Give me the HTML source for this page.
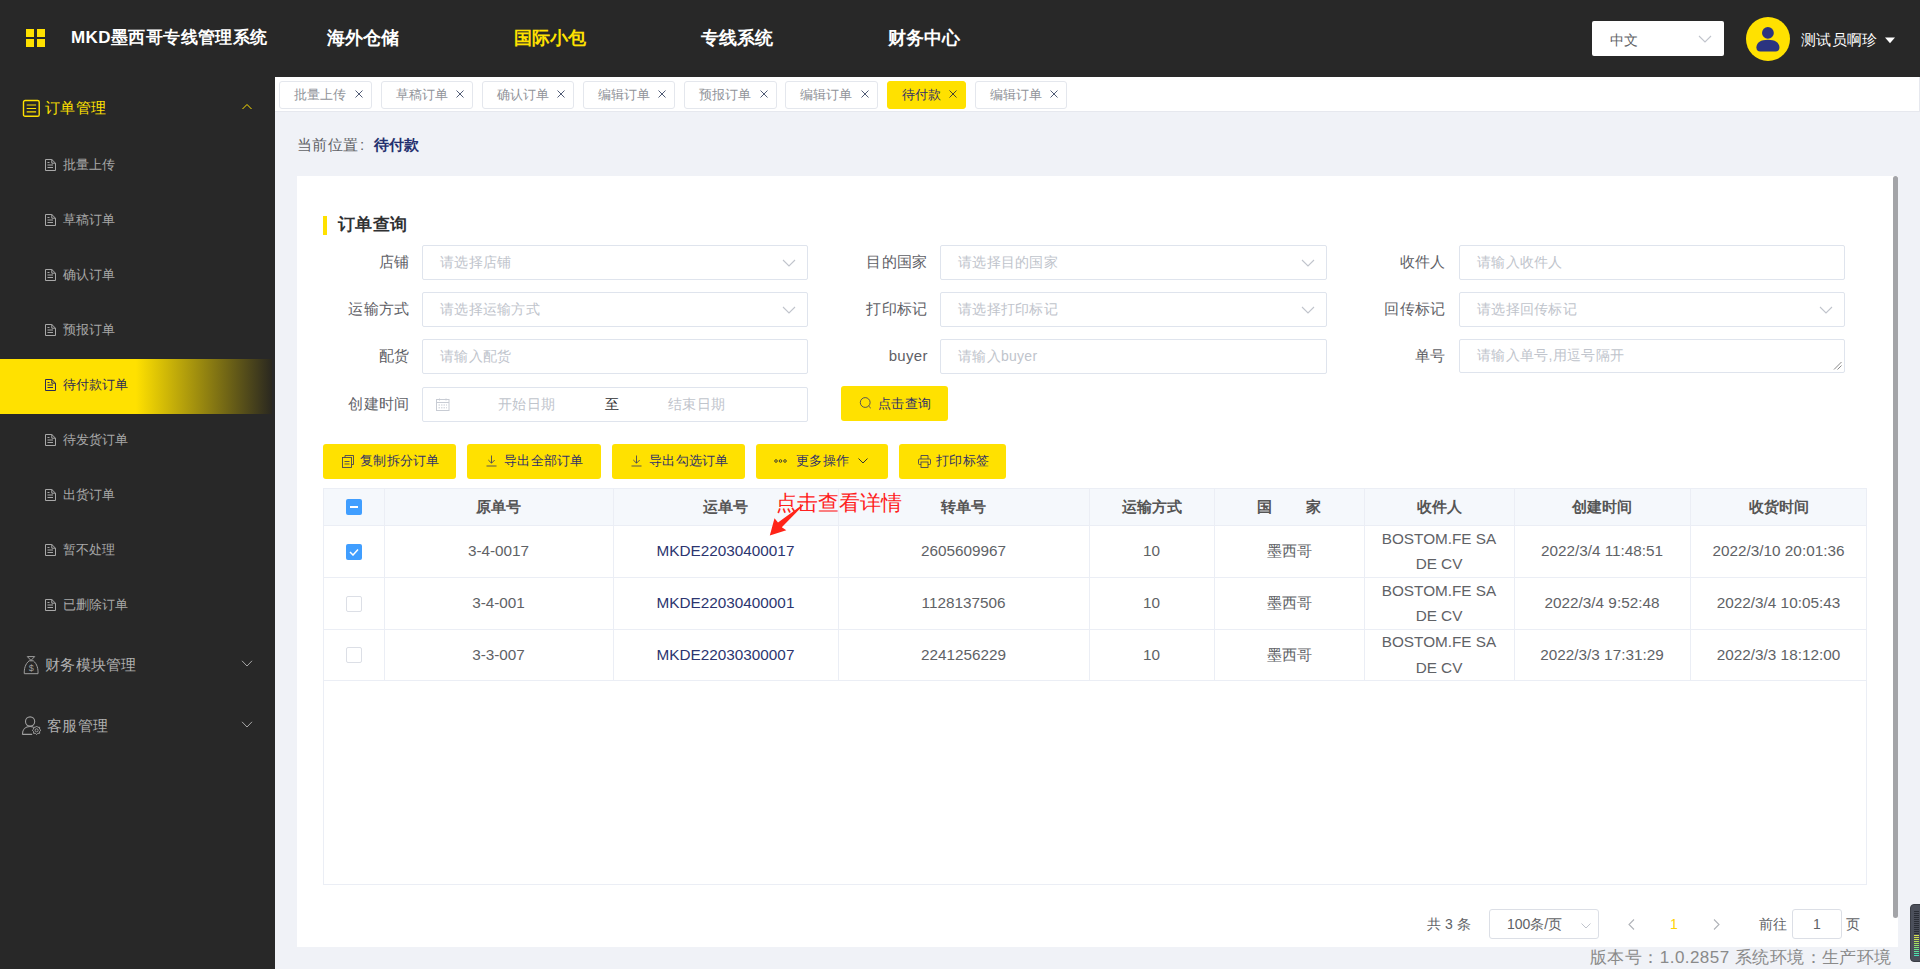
<!DOCTYPE html>
<html><head><meta charset="utf-8"><title>MKD</title>
<style>
*{box-sizing:border-box;margin:0;padding:0}
html,body{width:1920px;height:969px;overflow:hidden}
body{position:relative;background:#f0f2f7;font-family:"Liberation Sans",sans-serif;color:#606266}
svg{display:block}
.abs{position:absolute}
#hdr{position:absolute;left:0;top:0;width:1920px;height:77px;background:#282828}
#side{position:absolute;left:0;top:77px;width:275px;height:892px;background:#282828}
.nav{position:absolute;top:26px;font-size:18px;font-weight:bold;color:#fff;line-height:24px;white-space:nowrap}
.sq{position:absolute;width:8px;height:8px;background:#ffe100}
#tabs{position:absolute;left:275px;top:77px;width:1645px;height:35px;background:#fff;border-bottom:1px solid #e6e8ee;border-right:1px solid #e6e8ee}
.tab{position:absolute;top:4px;height:28px;border:1px solid #e4e7ed;border-radius:3px;background:#fff;font-size:13px;color:#909399;line-height:26px;padding-left:13.5px;white-space:nowrap}
.tab i{position:absolute;right:8px;top:8px;width:8px;height:8px;display:block}
.tab.on{background:#ffe100;border-color:#ffe100;color:#30306a}
.mi{position:absolute;left:45px;font-size:13px;color:#a8a8a8;line-height:20px;white-space:nowrap}
.mi svg{position:absolute;left:0;top:4px}
.mi span{position:absolute;left:18px;top:0}
#card{position:absolute;left:297px;top:176px;width:1601px;height:771px;background:#fff}
.lbl{position:absolute;font-size:15px;letter-spacing:0.3px;color:#5e6066;line-height:20px;text-align:right;white-space:nowrap}
.inp{position:absolute;height:35px;border:1px solid #dfe4ed;border-radius:2px;background:#fff;font-size:14px;letter-spacing:0.3px;color:#c0c4cc;line-height:33px;padding-left:17px;white-space:nowrap}
.inp svg.dd{position:absolute;right:11px;top:13px}
.btn{position:absolute;height:35px;background:#ffe100;border-radius:3px;font-size:13px;letter-spacing:0.3px;color:#30306a;line-height:33px;white-space:nowrap}
.btn span{position:absolute;top:0}
.th{position:absolute;text-align:center;font-size:15px;font-weight:bold;color:#555;line-height:20px;white-space:nowrap}
.td{position:absolute;text-align:center;font-size:15.3px;color:#606266;line-height:20px;white-space:nowrap}
.hl{position:absolute;height:1px;background:#ebeef5}
.vl{position:absolute;width:1px;background:#ebeef5}
</style></head><body>
<div id="hdr">
<div class="sq" style="left:26px;top:29px"></div><div class="sq" style="left:37px;top:29px"></div>
<div class="sq" style="left:26px;top:39px"></div><div class="sq" style="left:37px;top:39px"></div>
<div class="nav" style="left:71px;font-size:17px;letter-spacing:0.4px">MKD墨西哥专线管理系统</div>
<div class="nav" style="left:327px;color:#fff">海外仓储</div>
<div class="nav" style="left:514px;color:#ffe100">国际小包</div>
<div class="nav" style="left:701px;color:#fff">专线系统</div>
<div class="nav" style="left:888px;color:#fff">财务中心</div>
<div class="abs" style="left:1592px;top:21px;width:132px;height:35px;background:#fff;border-radius:2px">
<div class="abs" style="left:18px;top:8.5px;font-size:14px;color:#606266;line-height:20px">中文</div>
<svg class="abs" style="left:106px;top:14px" width="14" height="8" viewBox="0 0 14 8"><path d="M1 1 L7 7 L13 1" fill="none" stroke="#c0c4cc" stroke-width="1.1"/></svg>
</div>
<div class="abs" style="left:1746px;top:17px;width:44px;height:44px;border-radius:50%;background:#ffe100;overflow:hidden">
<svg class="abs" style="left:0;top:0" width="44" height="44" viewBox="0 0 44 44"><circle cx="21.9" cy="15.9" r="5.9" fill="#2b3480"/><path d="M10.4 30.5 C10.4 25.5 15 22.8 21.9 22.8 C28.8 22.8 33.4 25.5 33.4 30.5 C33.4 33 32 34.4 29.5 34.4 H14.3 C11.8 34.4 10.4 33 10.4 30.5 Z" fill="#2b3480"/></svg>
</div>
<div class="abs" style="left:1801px;top:30px;font-size:15px;letter-spacing:0.3px;color:#fff;line-height:20px;white-space:nowrap">测试员啊珍</div>
<svg class="abs" style="left:1885px;top:37px" width="10" height="7" viewBox="0 0 10 7"><path d="M0 0.5 L10 0.5 L5 6.3 Z" fill="#fff"/></svg>
</div>
<div id="side">
<svg class="abs" style="left:22px;top:22px" width="19" height="19" viewBox="0 0 19 19"><rect x="1.5" y="1.45" width="15.7" height="15.8" rx="1.6" fill="none" stroke="#ffe100" stroke-width="1.4"/><path d="M4.7 6 H14.1 M4.7 9.5 H14.1 M4.7 12.8 H14.1" stroke="#ffe100" stroke-width="1.2"/></svg>
<div class="abs" style="left:45px;top:21px;font-size:15px;letter-spacing:0.3px;color:#ffe100;line-height:20px">订单管理</div>
<svg class="abs" style="left:241px;top:26px" width="12" height="7" viewBox="0 0 12 7"><path d="M1.5 6 L6 1.5 L10.5 6" fill="none" stroke="#ffe100" stroke-width="1"/></svg>
<div class="mi" style="top:78px;color:#a8a8a8"><svg width="11" height="12" viewBox="0 0 11 12"><path d="M0.5 0.5 H6.8 L10.5 4.2 V11.5 H0.5 Z M6.8 0.5 V4.2 H10.5" fill="none" stroke="#a8a8a8" stroke-width="1"/><path d="M2.5 3.5 H4.5 M2.5 6 H8 M2.5 8.5 H8" stroke="#a8a8a8" stroke-width="1"/></svg><span>批量上传</span></div>
<div class="mi" style="top:133px;color:#a8a8a8"><svg width="11" height="12" viewBox="0 0 11 12"><path d="M0.5 0.5 H6.8 L10.5 4.2 V11.5 H0.5 Z M6.8 0.5 V4.2 H10.5" fill="none" stroke="#a8a8a8" stroke-width="1"/><path d="M2.5 3.5 H4.5 M2.5 6 H8 M2.5 8.5 H8" stroke="#a8a8a8" stroke-width="1"/></svg><span>草稿订单</span></div>
<div class="mi" style="top:188px;color:#a8a8a8"><svg width="11" height="12" viewBox="0 0 11 12"><path d="M0.5 0.5 H6.8 L10.5 4.2 V11.5 H0.5 Z M6.8 0.5 V4.2 H10.5" fill="none" stroke="#a8a8a8" stroke-width="1"/><path d="M2.5 3.5 H4.5 M2.5 6 H8 M2.5 8.5 H8" stroke="#a8a8a8" stroke-width="1"/></svg><span>确认订单</span></div>
<div class="mi" style="top:243px;color:#a8a8a8"><svg width="11" height="12" viewBox="0 0 11 12"><path d="M0.5 0.5 H6.8 L10.5 4.2 V11.5 H0.5 Z M6.8 0.5 V4.2 H10.5" fill="none" stroke="#a8a8a8" stroke-width="1"/><path d="M2.5 3.5 H4.5 M2.5 6 H8 M2.5 8.5 H8" stroke="#a8a8a8" stroke-width="1"/></svg><span>预报订单</span></div>
<div class="abs" style="left:0;top:282px;width:272px;height:55px;background:linear-gradient(90deg,#ffe100 0%,#ffe100 50%,#2a2820 100%)"></div>
<div class="mi" style="top:298px;color:#2b2b55"><svg width="11" height="12" viewBox="0 0 11 12"><path d="M0.5 0.5 H6.8 L10.5 4.2 V11.5 H0.5 Z M6.8 0.5 V4.2 H10.5" fill="none" stroke="#2b2b55" stroke-width="1"/><path d="M2.5 3.5 H4.5 M2.5 6 H8 M2.5 8.5 H8" stroke="#2b2b55" stroke-width="1"/></svg><span>待付款订单</span></div>
<div class="mi" style="top:353px;color:#a8a8a8"><svg width="11" height="12" viewBox="0 0 11 12"><path d="M0.5 0.5 H6.8 L10.5 4.2 V11.5 H0.5 Z M6.8 0.5 V4.2 H10.5" fill="none" stroke="#a8a8a8" stroke-width="1"/><path d="M2.5 3.5 H4.5 M2.5 6 H8 M2.5 8.5 H8" stroke="#a8a8a8" stroke-width="1"/></svg><span>待发货订单</span></div>
<div class="mi" style="top:408px;color:#a8a8a8"><svg width="11" height="12" viewBox="0 0 11 12"><path d="M0.5 0.5 H6.8 L10.5 4.2 V11.5 H0.5 Z M6.8 0.5 V4.2 H10.5" fill="none" stroke="#a8a8a8" stroke-width="1"/><path d="M2.5 3.5 H4.5 M2.5 6 H8 M2.5 8.5 H8" stroke="#a8a8a8" stroke-width="1"/></svg><span>出货订单</span></div>
<div class="mi" style="top:463px;color:#a8a8a8"><svg width="11" height="12" viewBox="0 0 11 12"><path d="M0.5 0.5 H6.8 L10.5 4.2 V11.5 H0.5 Z M6.8 0.5 V4.2 H10.5" fill="none" stroke="#a8a8a8" stroke-width="1"/><path d="M2.5 3.5 H4.5 M2.5 6 H8 M2.5 8.5 H8" stroke="#a8a8a8" stroke-width="1"/></svg><span>暂不处理</span></div>
<div class="mi" style="top:518px;color:#a8a8a8"><svg width="11" height="12" viewBox="0 0 11 12"><path d="M0.5 0.5 H6.8 L10.5 4.2 V11.5 H0.5 Z M6.8 0.5 V4.2 H10.5" fill="none" stroke="#a8a8a8" stroke-width="1"/><path d="M2.5 3.5 H4.5 M2.5 6 H8 M2.5 8.5 H8" stroke="#a8a8a8" stroke-width="1"/></svg><span>已删除订单</span></div>
<svg class="abs" style="left:18px;top:573px" width="26" height="26" viewBox="0 0 26 26"><path d="M9.3 6.6 H16.7 L13 10.4 Z" fill="none" stroke="#a0a0a0" stroke-width="1"/><path d="M11.1 10.8 C7.2 14 6 19 6.3 23.7 H20 C20.3 19 19.2 14 15.3 10.8 Z" fill="none" stroke="#a0a0a0" stroke-width="1"/><text x="13.3" y="20.8" font-size="9" text-anchor="middle" fill="#a0a0a0" font-family="Liberation Sans">$</text></svg>
<div class="abs" style="left:45px;top:578px;font-size:15px;letter-spacing:0.3px;color:#b0b0b0;line-height:20px">财务模块管理</div>
<svg class="abs" style="left:241px;top:583px" width="12" height="7" viewBox="0 0 12 7"><path d="M1 0.8 L6 6 L11 0.8" fill="none" stroke="#a8a8a8" stroke-width="1"/></svg>
<svg class="abs" style="left:18px;top:633px" width="26" height="26" viewBox="0 0 26 26"><circle cx="12.1" cy="11.5" r="4.6" fill="none" stroke="#a0a0a0" stroke-width="1.1"/><path d="M4.4 24.4 C4.4 19.5 7.5 16.5 12.1 16.5 C13.2 16.5 14.2 16.7 15 17 M4.4 24.4 H14.2" fill="none" stroke="#a0a0a0" stroke-width="1.1"/><path d="M22.90 20.30 L21.56 21.52 L21.64 23.34 L19.82 23.26 L18.60 24.60 L17.38 23.26 L15.56 23.34 L15.64 21.52 L14.30 20.30 L15.64 19.08 L15.56 17.26 L17.38 17.34 L18.60 16.00 L19.82 17.34 L21.64 17.26 L21.56 19.08 Z" fill="none" stroke="#a0a0a0" stroke-width="1"/><circle cx="18.6" cy="20.3" r="1.5" fill="none" stroke="#a0a0a0" stroke-width="0.9"/></svg>
<div class="abs" style="left:47px;top:639px;font-size:15px;letter-spacing:0.3px;color:#b0b0b0;line-height:20px">客服管理</div>
<svg class="abs" style="left:241px;top:644px" width="12" height="7" viewBox="0 0 12 7"><path d="M1 0.8 L6 6 L11 0.8" fill="none" stroke="#a8a8a8" stroke-width="1"/></svg>
</div>
<div id="tabs">
<div class="tab" style="left:4.0px;width:93px">批量上传<i><svg width="8" height="8" viewBox="0 0 8 8"><path d="M0.5 0.5 L7.5 7.5 M7.5 0.5 L0.5 7.5" stroke="#3d4a66" stroke-width="0.9"/></svg></i></div>
<div class="tab" style="left:106.0px;width:92px">草稿订单<i><svg width="8" height="8" viewBox="0 0 8 8"><path d="M0.5 0.5 L7.5 7.5 M7.5 0.5 L0.5 7.5" stroke="#3d4a66" stroke-width="0.9"/></svg></i></div>
<div class="tab" style="left:207.0px;width:92px">确认订单<i><svg width="8" height="8" viewBox="0 0 8 8"><path d="M0.5 0.5 L7.5 7.5 M7.5 0.5 L0.5 7.5" stroke="#3d4a66" stroke-width="0.9"/></svg></i></div>
<div class="tab" style="left:308.0px;width:92px">编辑订单<i><svg width="8" height="8" viewBox="0 0 8 8"><path d="M0.5 0.5 L7.5 7.5 M7.5 0.5 L0.5 7.5" stroke="#3d4a66" stroke-width="0.9"/></svg></i></div>
<div class="tab" style="left:409.0px;width:93px">预报订单<i><svg width="8" height="8" viewBox="0 0 8 8"><path d="M0.5 0.5 L7.5 7.5 M7.5 0.5 L0.5 7.5" stroke="#3d4a66" stroke-width="0.9"/></svg></i></div>
<div class="tab" style="left:510.0px;width:93px">编辑订单<i><svg width="8" height="8" viewBox="0 0 8 8"><path d="M0.5 0.5 L7.5 7.5 M7.5 0.5 L0.5 7.5" stroke="#3d4a66" stroke-width="0.9"/></svg></i></div>
<div class="tab on" style="left:612.0px;width:79px">待付款<i><svg width="8" height="8" viewBox="0 0 8 8"><path d="M0.5 0.5 L7.5 7.5 M7.5 0.5 L0.5 7.5" stroke="#333" stroke-width="0.9"/></svg></i></div>
<div class="tab" style="left:700.0px;width:92px">编辑订单<i><svg width="8" height="8" viewBox="0 0 8 8"><path d="M0.5 0.5 L7.5 7.5 M7.5 0.5 L0.5 7.5" stroke="#3d4a66" stroke-width="0.9"/></svg></i></div>
</div>
<div class="abs" style="left:297px;top:135px;font-size:15px;letter-spacing:0.4px;line-height:20px;color:#606266;white-space:nowrap">当前位置</div>
<div class="abs" style="left:360px;top:135px;font-size:15px;line-height:20px;color:#606266;white-space:nowrap">:</div>
<div class="abs" style="left:374px;top:135px;font-size:15px;font-weight:bold;line-height:20px;color:#24306e;white-space:nowrap">待付款</div>
<div id="card">
<div class="abs" style="left:26px;top:40px;width:4px;height:19px;background:#ffe100"></div>
<div class="abs" style="left:41px;top:37px;font-size:17px;letter-spacing:0.4px;font-weight:bold;color:#303133;line-height:24px">订单查询</div>
<div class="lbl" style="left:12.6px;top:75.5px;width:100px">店铺</div>
<div class="inp" style="left:125.0px;top:69.0px;width:386px">请选择店铺<svg class="dd" width="14" height="8" viewBox="0 0 14 8"><path d="M1 1 L7 7 L13 1" fill="none" stroke="#c0c4cc" stroke-width="1.1"/></svg></div>
<div class="lbl" style="left:530.7px;top:75.5px;width:100px">目的国家</div>
<div class="inp" style="left:643.0px;top:69.0px;width:387px">请选择目的国家<svg class="dd" width="14" height="8" viewBox="0 0 14 8"><path d="M1 1 L7 7 L13 1" fill="none" stroke="#c0c4cc" stroke-width="1.1"/></svg></div>
<div class="lbl" style="left:1048.6px;top:75.5px;width:100px">收件人</div>
<div class="inp" style="left:1162.0px;top:69.0px;width:386px">请输入收件人</div>
<div class="lbl" style="left:12.6px;top:122.5px;width:100px">运输方式</div>
<div class="inp" style="left:125.0px;top:116.0px;width:386px">请选择运输方式<svg class="dd" width="14" height="8" viewBox="0 0 14 8"><path d="M1 1 L7 7 L13 1" fill="none" stroke="#c0c4cc" stroke-width="1.1"/></svg></div>
<div class="lbl" style="left:530.7px;top:122.5px;width:100px">打印标记</div>
<div class="inp" style="left:643.0px;top:116.0px;width:387px">请选择打印标记<svg class="dd" width="14" height="8" viewBox="0 0 14 8"><path d="M1 1 L7 7 L13 1" fill="none" stroke="#c0c4cc" stroke-width="1.1"/></svg></div>
<div class="lbl" style="left:1048.6px;top:122.5px;width:100px">回传标记</div>
<div class="inp" style="left:1162.0px;top:116.0px;width:386px">请选择回传标记<svg class="dd" width="14" height="8" viewBox="0 0 14 8"><path d="M1 1 L7 7 L13 1" fill="none" stroke="#c0c4cc" stroke-width="1.1"/></svg></div>
<div class="lbl" style="left:12.6px;top:169.5px;width:100px">配货</div>
<div class="inp" style="left:125.0px;top:163.0px;width:386px">请输入配货</div>
<div class="lbl" style="left:530.7px;top:169.5px;width:100px">buyer</div>
<div class="inp" style="left:643.0px;top:163.0px;width:387px">请输入buyer</div>
<div class="lbl" style="left:1048.6px;top:169.5px;width:100px">单号</div>
<div class="inp" style="left:1162.0px;top:163.0px;width:386px;height:34px;line-height:30px">请输入单号,用逗号隔开<svg class="abs" style="right:2px;bottom:2px" width="9" height="9" viewBox="0 0 9 9"><path d="M1 8.5 L8.5 1 M4.5 8.5 L8.5 4.5" stroke="#888" stroke-width="1"/></svg></div>
<div class="lbl" style="left:12.6px;top:217.5px;width:100px">创建时间</div>
<div class="inp" style="left:125.0px;top:211.0px;width:386px">
<svg class="abs" style="left:13px;top:10px" width="14" height="14" viewBox="0 0 14 14"><rect x="0.5" y="1.5" width="12.5" height="11" fill="none" stroke="#c8ccd4" stroke-width="1"/><path d="M0.5 4.5 H13" stroke="#c8ccd4" stroke-width="1"/><path d="M3.5 0.5 V2.5 M10 0.5 V2.5" stroke="#c8ccd4" stroke-width="1"/><path d="M2.5 7 H11 M2.5 9.8 H11" stroke="#c8ccd4" stroke-width="1" stroke-dasharray="1.5 1"/></svg>
<span class="abs" style="left:75px;top:0">开始日期</span>
<span class="abs" style="left:182px;top:0;color:#303133">至</span>
<span class="abs" style="left:245px;top:0">结束日期</span>
</div>
<div class="abs" style="left:544px;top:210px;width:107px;height:35px;background:#ffe100;border-radius:3px">
<svg class="abs" style="left:18px;top:11px" width="13" height="13" viewBox="0 0 13 13"><circle cx="6.2" cy="5.5" r="4.9" fill="none" stroke="#3c3c66" stroke-width="0.85"/><path d="M9.6 9 L11.8 11.2" stroke="#3c3c66" stroke-width="0.85"/></svg>
<span class="abs" style="left:37px;top:8px;font-size:13px;letter-spacing:0.3px;line-height:19px;color:#30306a">点击查询</span>
</div>
<div class="btn" style="left:26px;top:268px;width:133px"><span style="left:19px;top:11px"><svg width="12" height="13" viewBox="0 0 12 13"><path d="M3 2.5 V0.5 H11.5 V9.5 H9.5" fill="none" stroke="#3c3c5c" stroke-width="0.85"/><rect x="0.5" y="2.5" width="9" height="10" fill="none" stroke="#3c3c5c" stroke-width="0.85"/><path d="M2.5 6.5 H7.5 M2.5 9 H7.5" stroke="#3c3c5c" stroke-width="0.85"/></svg></span><span style="left:37px">复制拆分订单</span></div>
<div class="btn" style="left:170px;top:268px;width:134px"><span style="left:19px;top:11px"><svg width="11" height="12" viewBox="0 0 11 12"><path d="M5.5 0.5 V8 M2.3 5 L5.5 8.2 L8.7 5 M0.5 11 H10.5" fill="none" stroke="#3c3c5c" stroke-width="0.85"/></svg></span><span style="left:37px">导出全部订单</span></div>
<div class="btn" style="left:315px;top:268px;width:133px"><span style="left:19px;top:11px"><svg width="11" height="12" viewBox="0 0 11 12"><path d="M5.5 0.5 V8 M2.3 5 L5.5 8.2 L8.7 5 M0.5 11 H10.5" fill="none" stroke="#3c3c5c" stroke-width="0.85"/></svg></span><span style="left:37px">导出勾选订单</span></div>
<div class="btn" style="left:459px;top:268px;width:132px"><span style="left:18px;top:15px"><svg width="13" height="4" viewBox="0 0 13 4"><circle cx="2" cy="2" r="1.3" fill="none" stroke="#333" stroke-width="0.9"/><circle cx="6.5" cy="2" r="1.3" fill="none" stroke="#333" stroke-width="0.9"/><circle cx="11" cy="2" r="1.3" fill="none" stroke="#333" stroke-width="0.9"/></svg></span><span style="left:40px">更多操作</span><span style="left:102px;top:14px"><svg width="10" height="6" viewBox="0 0 10 6"><path d="M0.5 0.5 L5 5 L9.5 0.5" fill="none" stroke="#333" stroke-width="1"/></svg></span></div>
<div class="btn" style="left:602px;top:268px;width:107px"><span style="left:19px;top:11px"><svg width="13" height="13" viewBox="0 0 13 13"><path d="M3 4 V0.5 H10 V4 M3 9.5 H1.5 Q0.5 9.5 0.5 8.5 V5 Q0.5 4 1.5 4 H11.5 Q12.5 4 12.5 5 V8.5 Q12.5 9.5 11.5 9.5 H10" fill="none" stroke="#3c3c5c" stroke-width="0.85"/><rect x="3" y="7" width="7" height="5.5" fill="none" stroke="#3c3c5c" stroke-width="0.85"/></svg></span><span style="left:37px">打印标签</span></div>
<div class="abs" style="left:26px;top:312px;width:1544px;height:37px;background:#f5f8fc"></div>
<div class="abs" style="left:26px;top:312px;width:1544px;height:397px;border:1px solid #ebeef5"></div>
<div class="hl" style="left:26px;top:349px;width:1544px"></div>
<div class="hl" style="left:26px;top:401px;width:1544px"></div>
<div class="hl" style="left:26px;top:453px;width:1544px"></div>
<div class="hl" style="left:26px;top:504px;width:1544px"></div>
<div class="vl" style="left:87px;top:312px;height:193px"></div>
<div class="vl" style="left:316px;top:312px;height:193px"></div>
<div class="vl" style="left:541px;top:312px;height:193px"></div>
<div class="vl" style="left:792px;top:312px;height:193px"></div>
<div class="vl" style="left:917px;top:312px;height:193px"></div>
<div class="vl" style="left:1067px;top:312px;height:193px"></div>
<div class="vl" style="left:1217px;top:312px;height:193px"></div>
<div class="vl" style="left:1393px;top:312px;height:193px"></div>
<div class="th" style="left:87px;top:321px;width:229px">原单号</div>
<div class="th" style="left:316px;top:321px;width:225px">运单号</div>
<div class="th" style="left:541px;top:321px;width:251px">转单号</div>
<div class="th" style="left:792px;top:321px;width:125px">运输方式</div>
<div class="th" style="left:917px;top:321px;width:150px"><span style="letter-spacing:1.6px;margin-left:1.6px">国　　家</span></div>
<div class="th" style="left:1067px;top:321px;width:150px">收件人</div>
<div class="th" style="left:1217px;top:321px;width:176px">创建时间</div>
<div class="th" style="left:1393px;top:321px;width:177px">收货时间</div>
<div class="abs" style="left:49px;top:323px;width:16px;height:16px;background:#409eff;border-radius:2px"><div class="abs" style="left:4px;top:7px;width:8px;height:2px;background:#fff"></div></div>
<div class="abs" style="left:49px;top:368px;width:16px;height:16px;background:#409eff;border-radius:2px"><svg class="abs" style="left:3px;top:4px" width="10" height="8" viewBox="0 0 10 8"><path d="M1 4 L4 7 L9 1.5" fill="none" stroke="#fff" stroke-width="1.5"/></svg></div>
<div class="td" style="left:87px;top:365.0px;width:229px;color:#606266">3-4-0017</div>
<div class="td" style="left:316px;top:365.0px;width:225px;color:#2c3570">MKDE22030400017</div>
<div class="td" style="left:541px;top:365.0px;width:251px;color:#606266">2605609967</div>
<div class="td" style="left:792px;top:365.0px;width:125px;color:#606266">10</div>
<div class="td" style="left:917px;top:365.0px;width:150px;color:#606266">墨西哥</div>
<div class="td" style="left:1067px;top:349.5px;width:150px;line-height:25.5px">BOSTOM.FE SA<br>DE CV</div>
<div class="td" style="left:1217px;top:365.0px;width:176px;color:#606266">2022/3/4 11:48:51</div>
<div class="td" style="left:1393px;top:365.0px;width:177px;color:#606266">2022/3/10 20:01:36</div>
<div class="abs" style="left:49px;top:420px;width:16px;height:16px;background:#fff;border:1px solid #dcdfe6;border-radius:2px"></div>
<div class="td" style="left:87px;top:417.0px;width:229px;color:#606266">3-4-001</div>
<div class="td" style="left:316px;top:417.0px;width:225px;color:#2c3570">MKDE22030400001</div>
<div class="td" style="left:541px;top:417.0px;width:251px;color:#606266">1128137506</div>
<div class="td" style="left:792px;top:417.0px;width:125px;color:#606266">10</div>
<div class="td" style="left:917px;top:417.0px;width:150px;color:#606266">墨西哥</div>
<div class="td" style="left:1067px;top:401.5px;width:150px;line-height:25.5px">BOSTOM.FE SA<br>DE CV</div>
<div class="td" style="left:1217px;top:417.0px;width:176px;color:#606266">2022/3/4 9:52:48</div>
<div class="td" style="left:1393px;top:417.0px;width:177px;color:#606266">2022/3/4 10:05:43</div>
<div class="abs" style="left:49px;top:471px;width:16px;height:16px;background:#fff;border:1px solid #dcdfe6;border-radius:2px"></div>
<div class="td" style="left:87px;top:468.5px;width:229px;color:#606266">3-3-007</div>
<div class="td" style="left:316px;top:468.5px;width:225px;color:#2c3570">MKDE22030300007</div>
<div class="td" style="left:541px;top:468.5px;width:251px;color:#606266">2241256229</div>
<div class="td" style="left:792px;top:468.5px;width:125px;color:#606266">10</div>
<div class="td" style="left:917px;top:468.5px;width:150px;color:#606266">墨西哥</div>
<div class="td" style="left:1067px;top:453.0px;width:150px;line-height:25.5px">BOSTOM.FE SA<br>DE CV</div>
<div class="td" style="left:1217px;top:468.5px;width:176px;color:#606266">2022/3/3 17:31:29</div>
<div class="td" style="left:1393px;top:468.5px;width:177px;color:#606266">2022/3/3 18:12:00</div>
<div class="abs" style="left:479px;top:314px;font-size:21px;color:#ff2020;line-height:26px;white-space:nowrap">点击查看详情</div>
<svg class="abs" style="left:463px;top:309px" width="50" height="55" viewBox="0 0 50 55"><path d="M9.8 50.5 L26.3 45.2 L21.8 42.3 L43.4 20.2 L42.6 19.6 L18.0 37.6 L14.5 33.2 Z" fill="#ff2418"/></svg>
<div class="abs" style="left:1130px;top:738px;font-size:14px;color:#606266;line-height:20px;white-space:nowrap">共 3 条</div>
<div class="abs" style="left:1192px;top:733px;width:110px;height:30px;border:1px solid #dcdfe6;border-radius:3px;font-size:14px;color:#606266;line-height:28px;padding-left:17px;white-space:nowrap">100条/页<svg class="abs" style="left:91px;top:13px" width="10" height="6" viewBox="0 0 10 6"><path d="M0.5 0.5 L5 5 L9.5 0.5" fill="none" stroke="#c0c4cc" stroke-width="1"/></svg></div>
<svg class="abs" style="left:1331px;top:743px" width="7" height="11" viewBox="0 0 7 11"><path d="M6 0.5 L1 5.5 L6 10.5" fill="none" stroke="#b0b3b8" stroke-width="1.1"/></svg>
<div class="abs" style="left:1373px;top:738px;font-size:14px;color:#ffd200;line-height:20px">1</div>
<svg class="abs" style="left:1416px;top:743px" width="7" height="11" viewBox="0 0 7 11"><path d="M1 0.5 L6 5.5 L1 10.5" fill="none" stroke="#b0b3b8" stroke-width="1.1"/></svg>
<div class="abs" style="left:1462px;top:738px;font-size:14px;color:#606266;line-height:20px;white-space:nowrap">前往</div>
<div class="abs" style="left:1495px;top:733px;width:50px;height:30px;border:1px solid #dcdfe6;border-radius:3px;font-size:14px;color:#606266;line-height:28px;text-align:center">1</div>
<div class="abs" style="left:1549px;top:738px;font-size:14px;color:#606266;line-height:20px">页</div>
<div class="abs" style="left:1596px;top:0;width:5px;height:742px;background:#a3a4a8;border-radius:3px"></div>
</div>
<div class="abs" style="left:1590px;top:946px;font-size:17px;letter-spacing:0.45px;color:#8a8a8a;line-height:24px;white-space:nowrap">版本号：1.0.2857 系统环境：生产环境</div>
<div class="abs" style="left:1910px;top:904px;width:14px;height:58px;background:#4b4f5a;border:1px solid #3a3d45;border-radius:4px"><div class="abs" style="left:3px;top:6px;width:5px;height:1px;background:#2a2d35"></div><div class="abs" style="left:3px;top:8px;width:5px;height:1px;background:#2a2d35"></div><div class="abs" style="left:3px;top:10px;width:5px;height:1px;background:#2a2d35"></div><div class="abs" style="left:3px;top:12px;width:5px;height:1px;background:#2a2d35"></div><div class="abs" style="left:3px;top:14px;width:5px;height:1px;background:#2a2d35"></div><div class="abs" style="left:3px;top:16px;width:5px;height:1px;background:#2a2d35"></div><div class="abs" style="left:3px;top:18px;width:5px;height:1px;background:#2a2d35"></div><div class="abs" style="left:3px;top:20px;width:5px;height:1px;background:#2a2d35"></div><div class="abs" style="left:3px;top:22px;width:5px;height:1px;background:#2a2d35"></div><div class="abs" style="left:3px;top:24px;width:5px;height:1px;background:#2a2d35"></div><div class="abs" style="left:3px;top:26px;width:5px;height:1px;background:#2a2d35"></div><div class="abs" style="left:3px;top:28px;width:5px;height:1px;background:#2a2d35"></div><div class="abs" style="left:3px;top:30px;width:5px;height:1px;background:#d7e04a"></div><div class="abs" style="left:3px;top:32px;width:5px;height:1px;background:#cfe04e"></div><div class="abs" style="left:3px;top:34px;width:5px;height:1px;background:#c3e052"></div><div class="abs" style="left:3px;top:36px;width:5px;height:1px;background:#b5e058"></div><div class="abs" style="left:3px;top:38px;width:5px;height:1px;background:#a5e060"></div><div class="abs" style="left:3px;top:40px;width:5px;height:1px;background:#93e06a"></div><div class="abs" style="left:3px;top:42px;width:5px;height:1px;background:#80e078"></div><div class="abs" style="left:3px;top:44px;width:5px;height:1px;background:#6ce088"></div><div class="abs" style="left:3px;top:46px;width:5px;height:1px;background:#5ce098"></div><div class="abs" style="left:3px;top:48px;width:5px;height:1px;background:#50e0a8"></div><div class="abs" style="left:3px;top:50px;width:5px;height:1px;background:#46e0b8"></div></div>
</body></html>
